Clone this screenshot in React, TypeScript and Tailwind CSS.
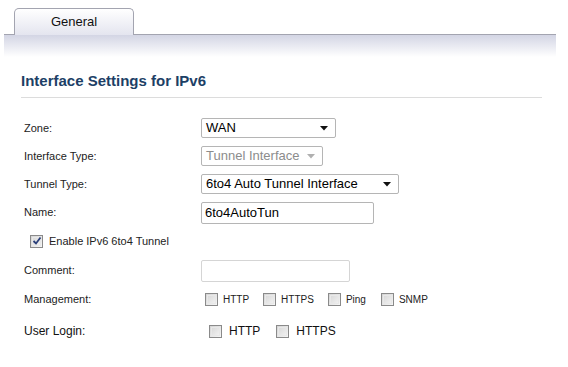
import React from 'react';

const font = { fontFamily: '"Liberation Sans", Arial, sans-serif' };

function Caret({ disabled }: { disabled?: boolean }) {
  return (
    <svg width="8" height="5" viewBox="0 0 8 5" className="shrink-0">
      <path d="M0 0 L8 0 L4 4.5 Z" fill={disabled ? '#b0b0b0' : '#111'} />
    </svg>
  );
}

function Select({ value, width, disabled }: { value: string; width: string; disabled?: boolean }) {
  return (
    <div
      className={`${width} h-[20px] flex items-center justify-between pl-[4px] pr-[7px] rounded-[2px] border border-[#b5b5b5] bg-white text-[13px] ${
        disabled ? 'text-[#8c8c8c]' : 'text-black'
      }`}
    >
      <span>{value}</span>
      <Caret disabled={disabled} />
    </div>
  );
}

function Box({ checked }: { checked?: boolean }) {
  return (
    <span className="relative w-[13px] h-[13px] shrink-0 border border-[#8a8a8a] bg-gradient-to-br from-[#d4d4d4] to-[#f6f6f6] flex items-center justify-center">
      <span className="w-[9px] h-[9px] border border-[#e8e8e8]" />
      {checked && (
        <svg width="10" height="10" viewBox="0 0 10 10" className="absolute left-[1px] top-[0px]">
          <path d="M1.5 5 L4 7.5 L8.5 1.5" fill="none" stroke="#2a3f7a" strokeWidth="1.8" />
        </svg>
      )}
    </span>
  );
}

function Row({ label, h, children }: { label?: string; h: string; children?: React.ReactNode }) {
  return (
    <div className={`flex items-center ${h}`}>
      <div className="w-[177px] shrink-0 text-[11px] text-[#222]">{label}</div>
      {children}
    </div>
  );
}

export default function App() {
  return (
    <div className="w-[568px] h-[367px] bg-white overflow-hidden" style={font}>
      {/* tab strip */}
      <div className="pt-[8px] px-[4px] w-[560px]">
        <div className="flex items-end h-[27px]">
          <div className="w-[10px] h-full border-b border-[#a3a4b0]" />
          <div className="w-[120px] h-full rounded-t-[5px] border border-b-0 border-[#a3a4b0] bg-gradient-to-b from-white to-[#e4e5ef] flex items-center justify-center text-[13px] text-[#111]">
            General
          </div>
          <div className="flex-1 h-full border-b border-[#a3a4b0]" />
        </div>
        <div className="h-[22px] bg-gradient-to-b from-[#d3d5e4] to-white" />
      </div>

      {/* section */}
      <div className="pl-[21px] pt-[15px] w-[542px]">
        <div className="text-[15px] font-bold text-[#1d3f66] pb-[8px] border-b border-[#dcdcdc] leading-[17px]">
          Interface Settings for IPv6
        </div>
      </div>

      <div className="pl-[24px] pt-[16px]">
        <Row label="Zone:" h="h-[28px]">
          <Select value="WAN" width="w-[135px]" />
        </Row>
        <Row label="Interface Type:" h="h-[28px]">
          <Select value="Tunnel Interface" width="w-[122px]" disabled />
        </Row>
        <Row label="Tunnel Type:" h="h-[28px]">
          <Select value="6to4 Auto Tunnel Interface" width="w-[198px]" />
        </Row>
        <Row label="Name:" h="h-[29px]">
          <div className="w-[173px] h-[22px] border border-[#b5b5b5] rounded-[2px] bg-white flex items-center pl-[3px] text-[13px] text-black">
            6to4AutoTun
          </div>
        </Row>
        <div className="flex items-center h-[29px] pl-[6px] gap-[6px] text-[11px] text-[#222]">
          <Box checked />
          <span>Enable IPv6 6to4 Tunnel</span>
        </div>
        <Row label="Comment:" h="h-[29px]">
          <div className="w-[149px] h-[22px] border border-[#d5d5d5] rounded-[2px] bg-white" />
        </Row>
        <Row label="Management:" h="h-[28px]">
          <div className="flex items-center pl-[4px] text-[10px] text-[#222]">
            <Box />
            <span className="ml-[5px] mr-[14px]">HTTP</span>
            <Box />
            <span className="ml-[5px] mr-[14px]">HTTPS</span>
            <Box />
            <span className="ml-[5px] mr-[15px]">Ping</span>
            <Box />
            <span className="ml-[5px]">SNMP</span>
          </div>
        </Row>
        <div className="flex items-center h-[36px]">
          <div className="w-[177px] shrink-0 text-[12px] text-[#111]">User Login:</div>
          <div className="flex items-center pl-[8px] text-[12px] text-[#111]">
            <Box />
            <span className="ml-[7px] mr-[16px]">HTTP</span>
            <Box />
            <span className="ml-[7px]">HTTPS</span>
          </div>
        </div>
      </div>
    </div>
  );
}
